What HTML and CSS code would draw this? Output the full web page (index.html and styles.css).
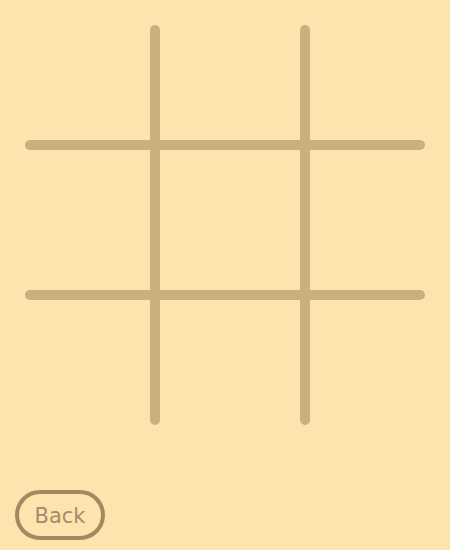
FILE: index.html
```html
<!DOCTYPE html>
<html>
<head>
<meta charset="utf-8">
<link rel="stylesheet" href="styles.css">
</head>
<body>
<div class="page">
  <div class="board">
    <div class="line v v1"></div>
    <div class="line v v2"></div>
    <div class="line h h1"></div>
    <div class="line h h2"></div>
  </div>
  <button class="back">Back</button>
</div>
</body>
</html>
```
FILE: styles.css
```css
html, body {
  margin: 0;
  padding: 0;
  background: #ffe3af;
}
.page {
  width: 450px;
  height: 550px;
  padding: 25px 0 0 15px;
  box-sizing: border-box;
  display: flex;
  flex-direction: column;
  align-items: flex-start;
}
.board {
  margin-left: 10px;
  width: 400px;
  height: 400px;
  display: grid;
  grid-template-columns: 125px 10px 140px 10px 115px;
  grid-template-rows: 115px 10px 140px 10px 125px;
}
.line {
  background: #c9b07e;
  border-radius: 5px;
}
.v { grid-row: 1 / 6; }
.v1 { grid-column: 2; }
.v2 { grid-column: 4; }
.h { grid-column: 1 / 6; }
.h1 { grid-row: 2; }
.h2 { grid-row: 4; }
.back {
  margin-top: 65px;
  width: 90px;
  height: 50px;
  box-sizing: border-box;
  border: 4px solid #a08a62;
  border-radius: 25px;
  background: transparent;
  color: #a38d68;
  font-family: "DejaVu Sans", sans-serif;
  font-size: 21px;
  padding: 3px 0 0 0;
  line-height: 1;
}
```
